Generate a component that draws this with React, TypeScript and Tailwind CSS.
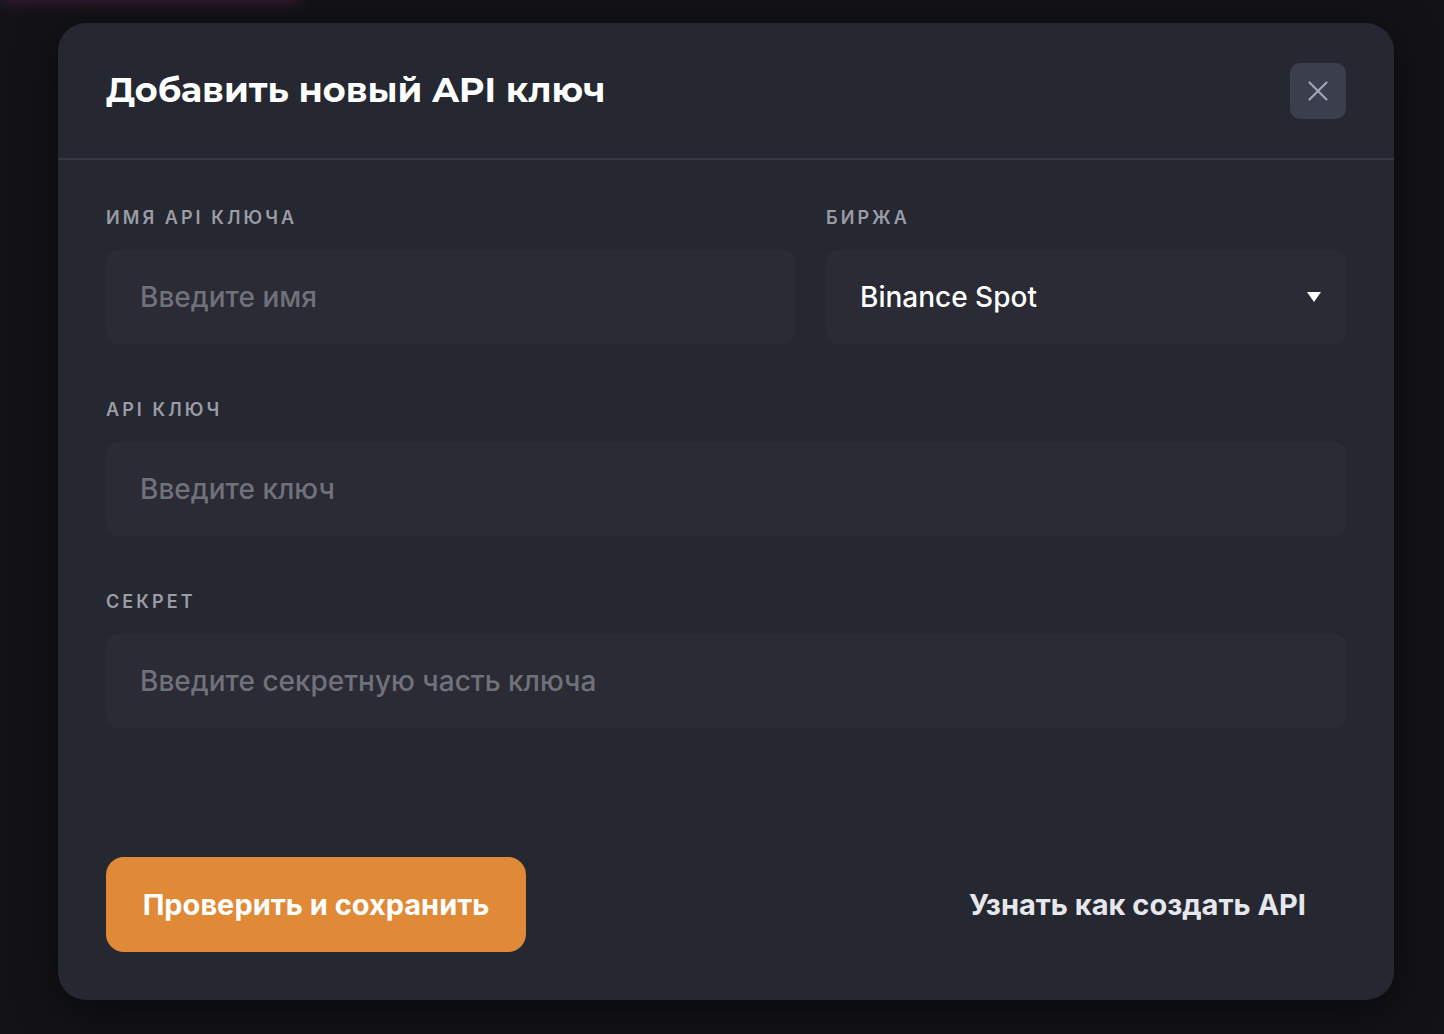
import { X } from "lucide-react";

const labelCls =
  "block text-[18px] leading-5 font-semibold uppercase tracking-[0.17em] text-[#9a9ca6]";
const inputCls =
  "h-[94px] w-full rounded-[12px] bg-[#2a2b34] px-[34px] text-[28px] font-medium text-white placeholder:text-[#6f717b] outline-none";

export default function App() {
  return (
    <div
      className="relative min-h-[1034px] w-full overflow-hidden bg-[#131316] px-[58px] pt-[23px]"
      style={{ fontFamily: "Inter, 'Noto Sans', sans-serif" }}
    >
      {/* faint glow at top-left */}
      <div className="pointer-events-none absolute -top-[6px] left-0 h-[10px] w-[300px] rounded-full bg-[#3a1a35] blur-[6px]" />

      <div className="relative flex h-[977px] w-[1336px] flex-col rounded-[28px] bg-[#252830] shadow-[0_10px_40px_rgba(0,0,0,0.5)]">
        {/* Header */}
        <div className="flex h-[137px] items-center justify-between border-b-2 border-[#363944] pl-[48px] pr-[48px]">
          <h2
            className="text-[35px] font-bold text-white"
            style={{ fontFamily: "Montserrat, 'Open Sans', Inter, sans-serif" }}
          >
            Добавить новый API ключ
          </h2>
          <button className="flex h-[56px] w-[56px] items-center justify-center rounded-[10px] bg-[#3b3e4d] text-[#a3a6b8]">
            <X size={34} strokeWidth={1.5} />
          </button>
        </div>

        {/* Body */}
        <div className="flex flex-1 flex-col px-[48px] pt-[48px] pb-[48px]">
          <div className="grid grid-cols-[689px_520px] gap-x-[31px]">
            <div>
              <label className={labelCls}>Имя API ключа</label>
              <input className={`${inputCls} mt-[22px]`} placeholder="Введите имя" />
            </div>
            <div>
              <label className={labelCls}>Биржа</label>
              <div className="mt-[22px] flex h-[94px] w-full items-center justify-between rounded-[12px] bg-[#2a2b34] pl-[34px] pr-[24px] text-[28px] font-medium text-white">
                <span>Binance Spot</span>
                <svg width="16" height="12" viewBox="0 0 16 12">
                  <path d="M1 1h14L8 11z" fill="#ffffff" />
                </svg>
              </div>
            </div>
          </div>

          <div className="mt-[56px]">
            <label className={labelCls}>API ключ</label>
            <input className={`${inputCls} mt-[22px]`} placeholder="Введите ключ" />
          </div>

          <div className="mt-[56px]">
            <label className={labelCls}>Секрет</label>
            <input
              className={`${inputCls} mt-[22px]`}
              placeholder="Введите секретную часть ключа"
            />
          </div>

          <div className="mt-auto flex items-center justify-between">
            <button className="h-[95px] w-[420px] rounded-[18px] bg-[#e08936] text-[29px] font-bold text-white">
              Проверить и сохранить
            </button>
            <button className="pr-[40px] text-[29px] font-bold text-[#e6e7ed]">
              Узнать как создать API
            </button>
          </div>
        </div>
      </div>
    </div>
  );
}
